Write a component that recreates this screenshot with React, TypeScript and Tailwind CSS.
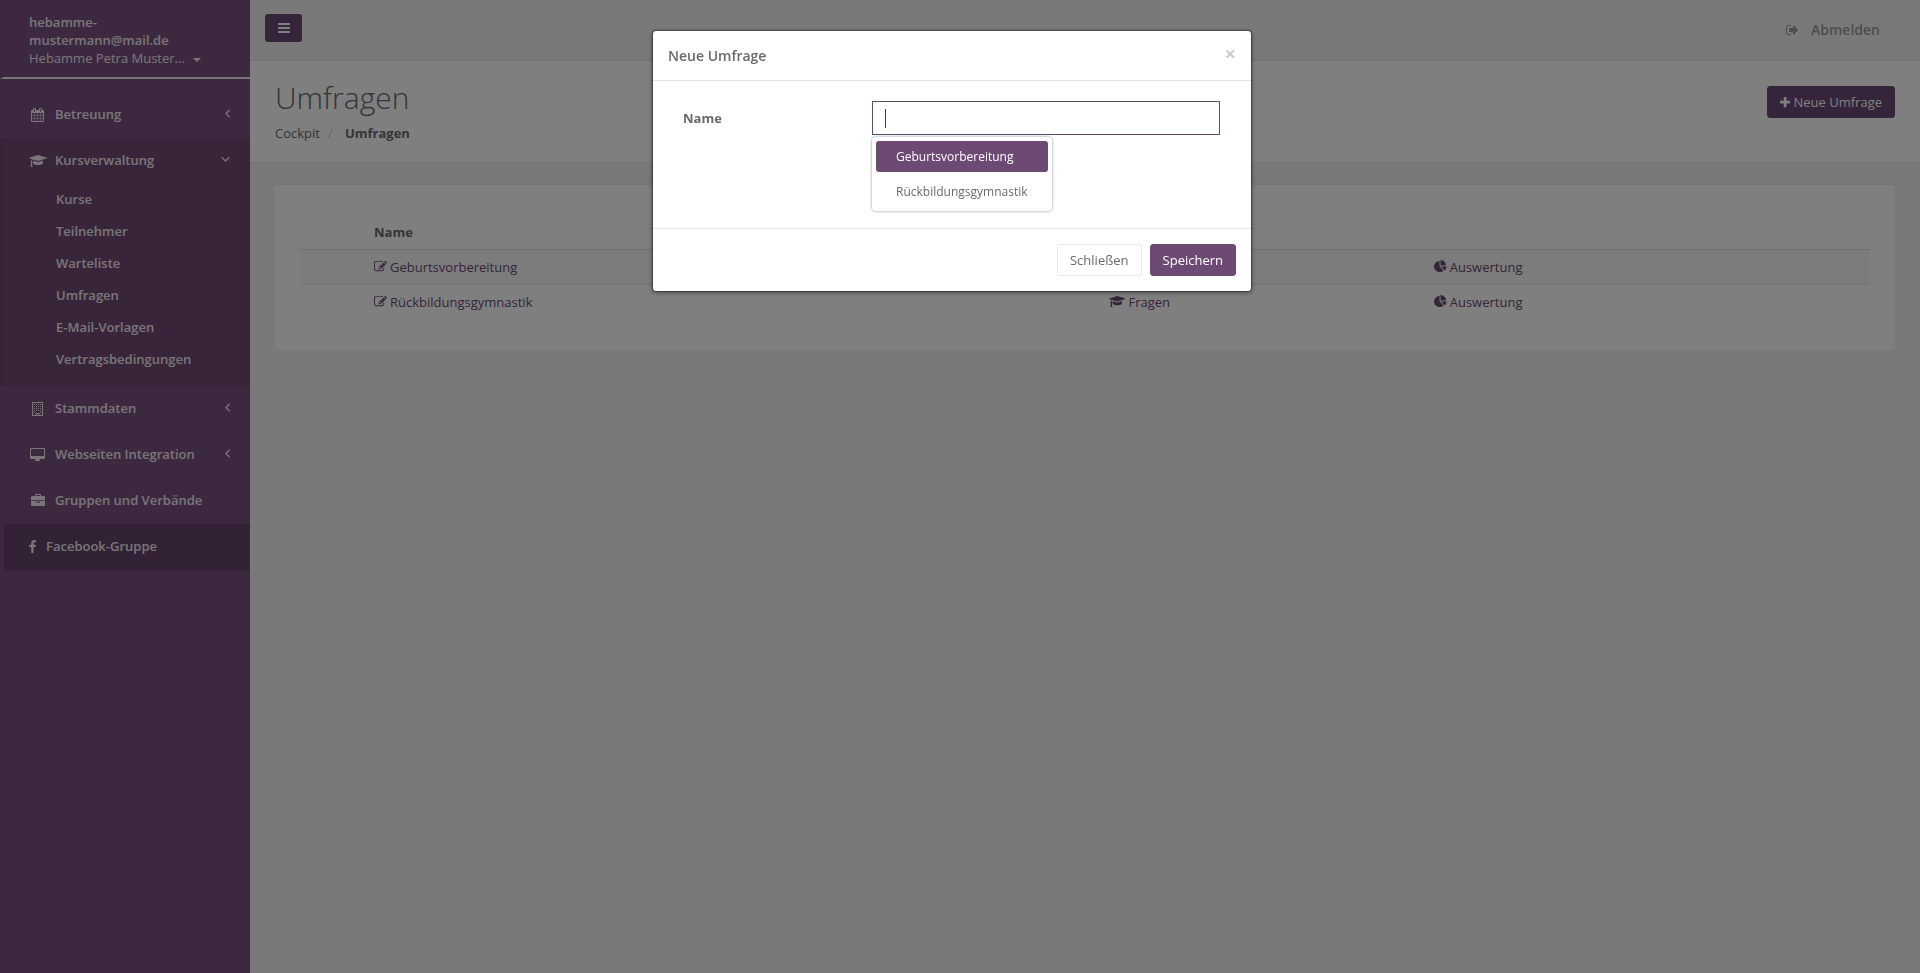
import { useState } from "react";
import clsx from "clsx";

// glyphs drawn on a 1792 unit em square, [path, left edge, advance width]
const glyphs = {
  calendar: ["M192 1664h288v-288h-288v288zm352 0h320v-288h-320v288zm-352-352h288v-320h-288v320zm352 0h320v-320h-320v320zm-352-384h288v-288h-288v288zm736 736h320v-288h-320v288zm-384-736h320v-288h-320v288zm768 736h288v-288h-288v288zm-384-352h320v-320h-320v320zm-352-864v-288q0-13-9.5-22.5t-22.5-9.5h-64q-13 0-22.5 9.5t-9.5 22.5v288q0 13 9.5 22.5t22.5 9.5h64q13 0 22.5-9.5t9.5-22.5zm736 864h288v-320h-288v320zm-384-384h320v-288h-320v288zm384 0h288v-288h-288v288zm32-480v-288q0-13-9.5-22.5t-22.5-9.5h-64q-13 0-22.5 9.5t-9.5 22.5v288q0 13 9.5 22.5t22.5 9.5h64q13 0 22.5-9.5t9.5-22.5zm384-64v1280q0 52-38 90t-90 38h-1408q-52 0-90-38t-38-90v-1280q0-52 38-90t90-38h128v-96q0-66 47-113t113-47h64q66 0 113 47t47 113v96h384v-96q0-66 47-113t113-47h64q66 0 113 47t47 113v96h128q52 0 90 38t38 90z", 64, 1664],
  graduation: ["M1774 836l18 316q4 69-82 128t-235 93.5-323 34.5-323-34.5-235-93.5-82-128l18-316 574 181q22 7 48 7t48-7zm530-324q0 23-22 31l-1120 352q-4 1-10 1t-10-1l-652-206q-43 34-71 111.5t-34 178.5q63 36 63 109 0 69-58 107l58 433q2 14-8 25-9 11-24 11h-192q-15 0-24-11-10-11-8-25l58-433q-58-38-58-107 0-73 65-111 11-207 98-330l-333-104q-22-8-22-31t22-31l1120-352q4-1 10-1t10 1l1120 352q22 8 22 31z", 0, 2304],
  building: ["M192 0h1408v1792h-1408zM320 128v1536h320v-256h512v256h320v-1536zM768 1536v128h256v-128zM448 256h128v128h-128zM704 256h128v128h-128zM960 256h128v128h-128zM1216 256h128v128h-128zM448 512h128v128h-128zM704 512h128v128h-128zM960 512h128v128h-128zM1216 512h128v128h-128zM448 768h128v128h-128zM704 768h128v128h-128zM960 768h128v128h-128zM1216 768h128v128h-128zM448 1024h128v128h-128zM704 1024h128v128h-128zM960 1024h128v128h-128zM1216 1024h128v128h-128zM448 1280h128v128h-128zM1216 1280h128v128h-128z", 192, 1408],
  desktop: ["M1728 992v-832q0-13-9.5-22.5t-22.5-9.5h-1600q-13 0-22.5 9.5t-9.5 22.5v832q0 13 9.5 22.5t22.5 9.5h1600q13 0 22.5-9.5t9.5-22.5zm128-832v1088q0 66-47 113t-113 47h-544q0 37 16 77.5t32 71 16 43.5q0 26-19 45t-45 19h-512q-26 0-45-19t-19-45q0-14 16-44t32-70 16-78h-544q-66 0-113-47t-47-113v-1088q0-66 47-113t113-47h1600q66 0 113 47t47 113z", -64, 1920],
  briefcase: ["M640 256h512v-128h-512v128zm1152 640v480q0 66-47 113t-113 47h-1472q-66 0-113-47t-47-113v-480h672v160q0 26 19 45t45 19h320q26 0 45-19t19-45v-160h672zm-768 0v128h-256v-128h256zm768-480v384h-1792v-384q0-66 47-113t113-47h352v-160q0-40 28-68t68-28h576q40 0 68 28t28 68v160h352q66 0 113 47t47 113z", 0, 1792],
  facebook: ["M1343 12v264h-157q-86 0-116 36t-30 108v189h293l-39 296h-254v759h-306v-759h-255v-296h255v-218q0-186 104-288.5t277-102.5q147 0 228 12z", 448, 1024],
  angleLeft: ["M1203 544q0 13-10 23l-393 393 393 393q10 10 10 23t-10 23l-50 50q-10 10-23 10t-23-10l-466-466q-10-10-10-23t10-23l466-466q10-10 23-10t23 10l50 50q10 10 10 23z", 576, 640],
  angleDown: ["M1395 736q0 13-10 23l-466 466q-10 10-23 10t-23-10l-466-466q-10-10-10-23t10-23l50-50q10-10 23-10t23 10l393 393 393-393q10-10 23-10t23 10l50 50q10 10 10 23z", 320, 1152],
  bars: ["M1664 1344v128q0 26-19 45t-45 19h-1408q-26 0-45-19t-19-45v-128q0-26 19-45t45-19h1408q26 0 45 19t19 45zm0-512v128q0 26-19 45t-45 19h-1408q-26 0-45-19t-19-45v-128q0-26 19-45t45-19h1408q26 0 45 19t19 45zm0-512v128q0 26-19 45t-45 19h-1408q-26 0-45-19t-19-45v-128q0-26 19-45t45-19h1408q26 0 45 19t19 45z", 128, 1536],
  signOut: ["M704 1440q0 4 1 20t.5 26.5-3 23.5-10 19.5-20.5 6.5h-320q-119 0-203.5-84.5t-84.5-203.5v-704q0-119 84.5-203.5t203.5-84.5h320q13 0 22.5 9.5t9.5 22.5q0 4 1 20t.5 26.5-3 23.5-10 19.5-20.5 6.5h-320q-66 0-113 47t-47 113v704q0 66 47 113t113 47h312l11.5 1 11.5 3 8 5.5 7 9 2 13.5zm928-544q0 26-19 45l-544 544q-19 19-45 19t-45-19-19-45v-288h-448q-26 0-45-19t-19-45v-384q0-26 19-45t45-19h448v-288q0-26 19-45t45-19 45 19l544 544q19 19 19 45z", 64, 1664],
  plus: ["M1600 736v192q0 40-28 68t-68 28h-416v416q0 40-28 68t-68 28h-192q-40 0-68-28t-28-68v-416h-416q-40 0-68-28t-28-68v-192q0-40 28-68t68-28h416v-416q0-40 28-68t68-28h192q40 0 68 28t28 68v416h416q40 0 68 28t28 68z", 192, 1408],
  edit: ["M888 1184l116-116-152-152-116 116v56h96v96h56zm440-720q-16-16-33 1l-350 350q-17 17-1 33t33-1l350-350q17-17 1-33zm80 594v190q0 119-84.5 203.5t-203.5 84.5h-832q-119 0-203.5-84.5t-84.5-203.5v-832q0-119 84.5-203.5t203.5-84.5h832q63 0 117 25 15 7 18 23 3 17-9 29l-49 49q-14 14-32 8-23-6-45-6h-832q-66 0-113 47t-47 113v832q0 66 47 113t113 47h832q66 0 113-47t47-113v-126q0-13 9-22l64-64q15-15 35-7t20 29zm-96-738l288 288-672 672h-288v-288zm444 132l-92 92-288-288 92-92q28-28 68-28t68 28l152 152q28 28 28 68t-28 68z", 0, 1792],
  pie: ["M768 890l546 546q-106 108-247.5 168t-298.5 60q-209 0-385.5-103t-279.5-279.5-103-385.5 103-385.5 279.5-279.5 385.5-103v762zm187 6h773q0 157-60 298.5t-168 247.5zm709-128h-768v-768q209 0 385.5 103t279.5 279.5 103 385.5z", 0, 1792],
} as const;

type IconName = keyof typeof glyphs;

function Icon({ name, className }: { name: IconName; className?: string }) {
  const [d, left, width] = glyphs[name];
  return (
    <svg viewBox={`${left} 0 ${width} 1792`} className={clsx("w-auto shrink-0", className ?? "h-[14px]")} fill="currentColor" fillRule="evenodd" aria-hidden="true">
      <path d={d} />
    </svg>
  );
}

const courseItems = ["Kurse", "Teilnehmer", "Warteliste", "Umfragen", "E-Mail-Vorlagen", "Vertragsbedingungen"];

const navItems: { name: string; icon: IconName; arrow?: IconName; children?: string[] }[] = [
  { name: "Betreuung", icon: "calendar", arrow: "angleLeft" },
  { name: "Kursverwaltung", icon: "graduation", arrow: "angleDown", children: courseItems },
  { name: "Stammdaten", icon: "building", arrow: "angleLeft" },
  { name: "Webseiten Integration", icon: "desktop", arrow: "angleLeft" },
  { name: "Gruppen und Verbände", icon: "briefcase" },
];

const surveys = ["Geburtsvorbereitung", "Rückbildungsgymnastik"];

function Sidebar() {
  return (
    <aside className="w-[250px] shrink-0 bg-[#7a527e] text-[13px] font-semibold text-[#f2eaf2]">
      <a href="#profil" className="block border-b-2 border-l-4 border-b-[#f2eaf2] border-l-transparent pt-[13px] pr-16 pb-[10px] pl-[25px] leading-[18px]">
        <span className="block">hebamme-mustermann@mail.de</span>
        <span className="flex items-center font-normal whitespace-nowrap">
          Hebamme Petra Muster...
          <span className="mt-1 ml-2 border-x-4 border-t-4 border-x-transparent border-t-current" />
        </span>
      </a>
      <nav className="pt-[13px]">
        <ul>
          {navItems.map((item) => (
            <li key={item.name} className={clsx(item.children && "border-l-4 border-[#6c4770] bg-[#704b75] pb-2.5")}>
              <a href="#" className={clsx("flex h-[46px] items-center pr-5", item.children ? "pl-[25px]" : "pl-[29px]")}>
                <span className="mr-[9px] flex w-[17px] justify-center">
                  <Icon name={item.icon} />
                </span>
                {item.name}
                {item.arrow && <Icon name={item.arrow} className="mb-1 ml-auto h-[14px] stroke-current stroke-[60]" />}
              </a>
              {item.children && (
                <ul>
                  {item.children.map((child) => (
                    <li key={child}>
                      <a href="#" className="flex h-8 items-center pl-[52px]">{child}</a>
                    </li>
                  ))}
                </ul>
              )}
            </li>
          ))}
          <li className="pl-1">
            <a href="#" className="flex h-[46px] items-center bg-[#66446b] pl-[25px]">
              <Icon name="facebook" className="mr-[9px] h-[14px]" />
              Facebook-Gruppe
            </a>
          </li>
        </ul>
      </nav>
    </aside>
  );
}

function SurveyTable() {
  return (
    <table className="w-full table-fixed text-left leading-[18px]">
      <colgroup>
        <col className="w-[66px]" />
        <col className="w-[46.8%]" />
        <col className="w-[20.7%]" />
        <col />
      </colgroup>
      <thead>
        <tr className="border-b border-[#ddd]">
          <th className="h-[34px]" />
          <th className="px-2 font-bold">Name</th>
          <th />
          <th />
        </tr>
      </thead>
      <tbody className="text-[#6d4a74]">
        {surveys.map((survey) => (
          <tr key={survey} className="h-[35px] border-t border-[#e7eaec] odd:bg-[#f9f9f9]">
            <td />
            <td className="px-2">
              <a href="#" className="flex items-center gap-[3px]"><Icon name="edit" className="h-[13px]" />{survey}</a>
            </td>
            <td className="px-2">
              <a href="#" className="flex items-center gap-[3px]"><Icon name="graduation" className="h-[13px]" />Fragen</a>
            </td>
            <td className="px-2">
              <a href="#" className="flex items-center gap-[3px]"><Icon name="pie" className="h-[13px]" />Auswertung</a>
            </td>
          </tr>
        ))}
      </tbody>
    </table>
  );
}

function SurveyDialog() {
  const [name, setName] = useState("");

  return (
    <div className="fixed inset-0 flex items-start justify-center bg-black/50 pt-[30px] pr-4">
      <div role="dialog" aria-labelledby="dialog-title" className="w-[600px] rounded border border-black/30 bg-white bg-clip-padding shadow-[0_1px_4px_rgba(0,0,0,0.4)]">
        <header className="flex h-[50px] items-center justify-between border-b border-[#e5e5e5] px-[15px]">
          <h4 id="dialog-title" className="text-sm font-semibold">Neue Umfrage</h4>
          <button type="button" aria-label="Schließen" className="pb-1 text-xl leading-5 font-bold text-[#ccc]">×</button>
        </header>
        <form id="survey-form" className="flex h-[147px] items-start pt-5 pr-[31px] pl-[30px]" onSubmit={(e) => e.preventDefault()}>
          <label htmlFor="name" className="w-[189px] shrink-0 pt-2 leading-[18px] font-bold">Name</label>
          <div className="relative flex-1">
            <input
              id="name"
              value={name}
              onChange={(e) => setName(e.target.value)}
              className="block h-[34px] w-full border border-[#5e4a68] px-3 outline-none"
            />
            {!name && <span className="absolute top-2 left-[13px] h-[19px] w-px bg-[#444]" />}
            <ul className="absolute top-9 left-0 flex flex-col gap-1 rounded bg-white p-1 text-xs shadow-[0_0_3px_rgba(86,96,117,0.7)]">
              {surveys.map((survey, i) => (
                <li key={survey}>
                  <button type="button" className={clsx("block h-[31px] w-full rounded-[3px] px-5 text-left", i === 0 && "bg-[#6d4a74] font-medium text-white")} onClick={() => setName(survey)}>
                    {survey}
                  </button>
                </li>
              ))}
            </ul>
          </div>
        </form>
        <footer className="flex justify-end gap-2 border-t border-[#e5e5e5] px-[15px] py-[15px]">
          <button type="button" className="h-8 rounded-[3px] border border-[#e7eaec] px-3 pt-px">Schließen</button>
          <button type="submit" form="survey-form" className="h-8 rounded-[3px] border border-[#6d4a74] bg-[#6d4a74] px-3 pt-px font-medium text-white">Speichern</button>
        </footer>
      </div>
    </div>
  );
}

export default function App() {
  return (
    <div className="flex min-h-screen bg-[#f3f3f4] font-['Open_Sans',sans-serif] text-[13px] text-[#676a6c]">
      <Sidebar />
      <div className="min-w-0 flex-1">
        <header className="flex h-[61px] items-start justify-between border-b-2 border-[#e7eaec] pr-10 pl-[15px]">
          <button type="button" aria-label="Navigation" className="mt-3.5 flex h-7 w-[37px] items-center justify-center rounded-[3px] bg-[#6d4a74] text-white">
            <Icon name="bars" />
          </button>
          <a href="#abmelden" className="flex h-[60px] items-center gap-3 text-sm font-semibold text-[#999c9e]">
            <Icon name="signOut" />
            Abmelden
          </a>
        </header>
        <section className="flex h-[102px] items-start justify-between border-b border-[#e7eaec] bg-white px-[25px]">
          <div>
            <h2 className="mt-5 text-[30px] leading-[33px] font-light">Umfragen</h2>
            <nav className="mt-2.5 flex leading-[18px]">
              <a href="#cockpit">Cockpit</a>
              <span className="w-[25px] pl-2 text-[#ccc]">/</span>
              <strong className="font-bold">Umfragen</strong>
            </nav>
          </div>
          <button type="button" className="mt-[25px] flex h-8 items-center gap-[3px] rounded-[3px] border border-[#6d4a74] bg-[#6d4a74] px-3 pt-px text-white">
            <Icon name="plus" className="h-[13px]" />
            Neue Umfrage
          </button>
        </section>
        <main className="px-[25px] pt-5">
          <div className="border-t-2 border-[#e7eaec] bg-white px-[25px] pt-[30px] pb-[31px]">
            <SurveyTable />
          </div>
        </main>
      </div>
      <SurveyDialog />
    </div>
  );
}
